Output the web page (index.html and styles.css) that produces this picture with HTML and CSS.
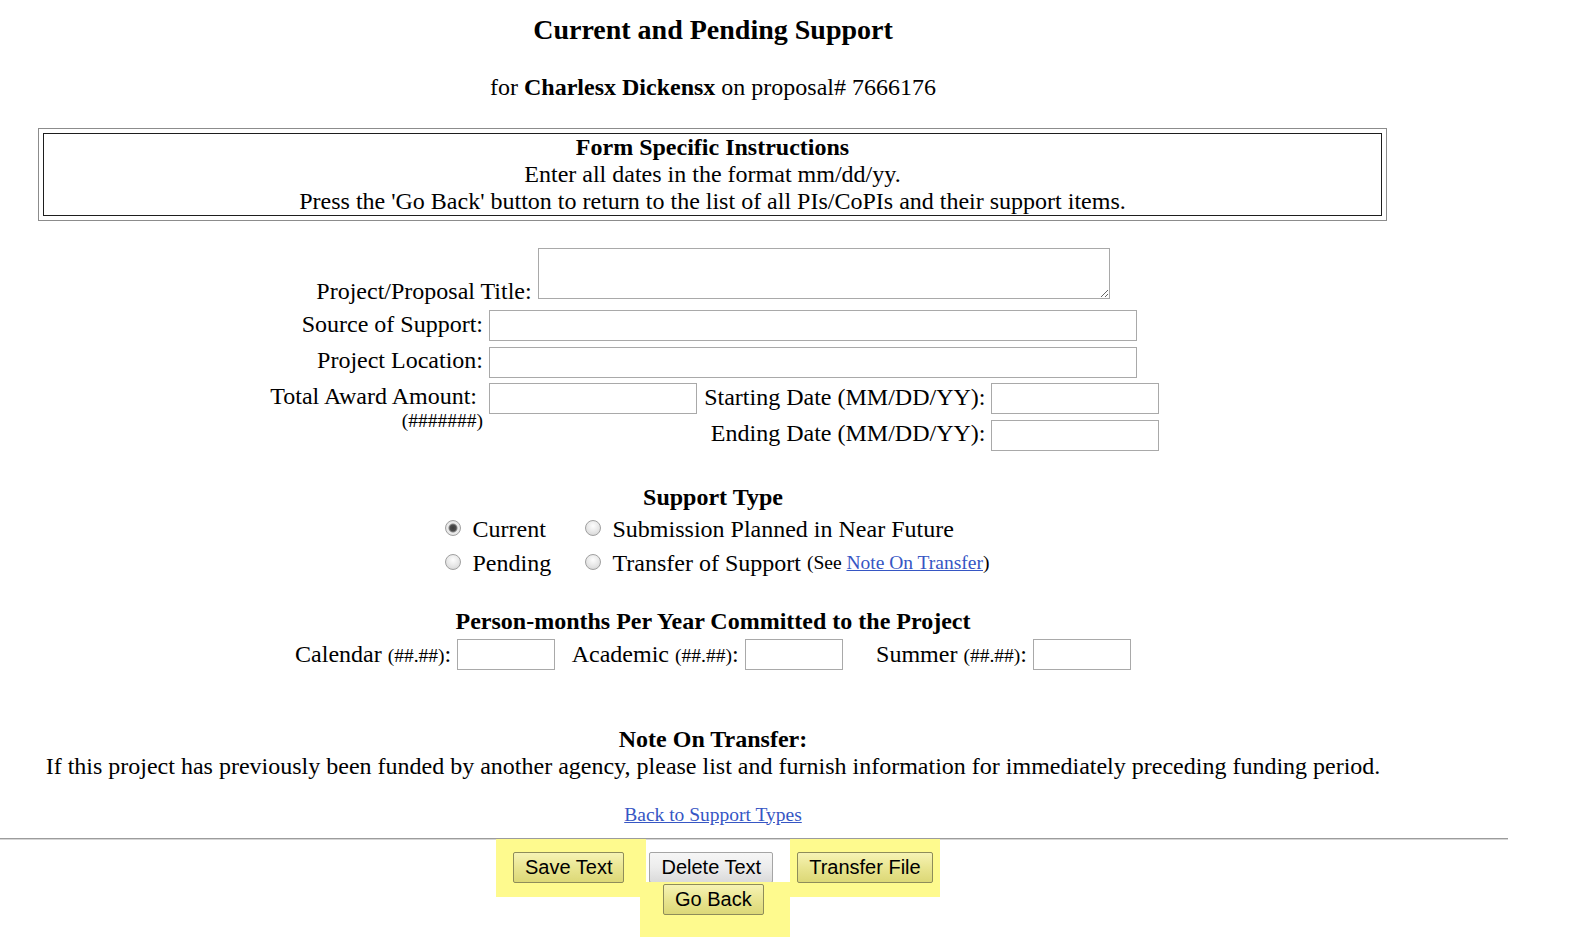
FILE: index.html
```html
<!DOCTYPE html>
<html>
<head>
<meta charset="utf-8">
<title>Current and Pending Support</title>
<link rel="stylesheet" href="styles.css">
</head>
<body>
<div class="page">
  <h1 class="title">Current and Pending Support</h1>
  <p class="for">for <b>Charlesx Dickensx</b> on proposal# 7666176</p>

  <div class="box">
    <div class="box-inner">
      <b>Form Specific Instructions</b><br>
      Enter all dates in the format mm/dd/yy.<br>
      Press the 'Go Back' button to return to the list of all PIs/CoPIs and their support items.
    </div>
  </div>

  <div class="title-row">
    <label class="lbl-title">Project/Proposal Title:</label>
    <textarea class="ta"></textarea>
  </div>

  <div class="fields">
    <label class="lbl c1 r1">Source of Support:</label>
    <input class="in wide r1" type="text">
    <label class="lbl c1 r2">Project Location:</label>
    <input class="in wide r2" type="text">
    <div class="lbl-award">
      <span class="lbl-line">Total Award Amount:</span>
      <span class="small hint">(#######)</span>
    </div>
    <input class="in award r3" type="text">
    <label class="lbl c3 r3">Starting Date (MM/DD/YY):</label>
    <input class="in date r3" type="text">
    <label class="lbl c3 r4">Ending Date (MM/DD/YY):</label>
    <input class="in date r4" type="text">
  </div>

  <h3 class="sec sec-type">Support Type</h3>
  <div class="types">
    <label class="opt"><input type="radio" name="t" class="rb" checked>Current</label>
    <label class="opt"><input type="radio" name="t" class="rb">Submission Planned in Near Future</label>
    <label class="opt"><input type="radio" name="t" class="rb">Pending</label>
    <label class="opt"><input type="radio" name="t" class="rb">Transfer of Support <span class="small see">(See <a href="#note" class="link">Note On Transfer</a>)</span></label>
  </div>

  <h3 class="sec sec-months">Person-months Per Year Committed to the Project</h3>
  <div class="months">
    <label class="m-lbl">Calendar <span class="small">(##.##)</span>:</label>
    <input class="in mon" type="text">
    <label class="m-lbl m-ac">Academic <span class="small">(##.##)</span>:</label>
    <input class="in mon" type="text">
    <label class="m-lbl m-su">Summer <span class="small">(##.##)</span>:</label>
    <input class="in mon" type="text">
  </div>

  <h3 class="sec sec-note" id="note">Note On Transfer:</h3>
  <p class="note">If this project has previously been funded by another agency, please list and furnish information for immediately preceding funding period.</p>
  <p class="back"><a href="#" class="link">Back to Support Types</a></p>
</div>
<hr class="rule">
<div class="btn-row1">
  <span class="hl hl-save"><button class="btn yellow">Save Text</button></span>
  <button class="btn gray">Delete Text</button>
  <span class="hl hl-transfer"><button class="btn yellow">Transfer File</button></span>
</div>
<div class="btn-row2">
  <span class="hl hl-back"><button class="btn yellow">Go Back</button></span>
</div>
</body>
</html>
```

FILE: styles.css
```css
html, body {
  margin: 0;
  padding: 0;
  background: #fff;
}
body {
  font-family: "Liberation Serif", "Times New Roman", serif;
  font-size: 24px;
  line-height: 26.5px;
  color: #000;
  width: 1589px;
  height: 937px;
  overflow: hidden;
}
.page {
  width: 1426px;
}
.title {
  font-size: 28px;
  line-height: 32px;
  font-weight: bold;
  text-align: center;
  margin: 14px 0 0;
}
.for {
  text-align: center;
  margin: 28px 0 0;
}
.box {
  margin: 27.5px 0 0 38px;
  width: 1339px;
  border: 1px solid #8c8c8c;
  padding: 4px;
}
.box-inner {
  border: 1px solid #1e1e1e;
  text-align: center;
  line-height: 27px;
}
.title-row {
  display: flex;
  justify-content: center;
  align-items: flex-end;
  gap: 6px;
  margin-top: 27px;
}
.lbl-title {
  margin-bottom: -5px;
}
.ta {
  width: 572px;
  height: 51px;
  box-sizing: border-box;
  border: 1px solid #a9a9a9;
  margin: 0;
  padding: 2px;
  font: inherit;
}
.fields {
  display: grid;
  grid-template-columns: 216px 208px 283.5px 168px;
  grid-template-rows: 31px 31px 31px 31px;
  column-gap: 5.5px;
  row-gap: 5.5px;
  justify-content: center;
  margin-top: 11px;
  align-items: center;
}
.lbl {
  text-align: right;
  white-space: nowrap;
  margin-top: -3px;
}
.c1 { grid-column: 1; }
.c3 { grid-column: 3; }
.r1 { grid-row: 1; }
.r2 { grid-row: 2; }
.r3 { grid-row: 3; }
.r4 { grid-row: 4; }
.in {
  box-sizing: border-box;
  height: 31px;
  border: 1px solid #a9a9a9;
  margin: 0;
  padding: 0 3px;
  font: inherit;
  background: #fff;
}
.wide {
  grid-column: 2 / span 3;
  width: 648.5px;
  justify-self: start;
}
.award {
  grid-column: 2;
  width: 208px;
}
.date {
  grid-column: 4;
  width: 168px;
}
.lbl-award {
  grid-column: 1;
  grid-row: 3 / span 2;
  align-self: start;
  text-align: right;
  display: flex;
  flex-direction: column;
  align-items: flex-end;
  white-space: nowrap;
}
.lbl-line {
  line-height: 27px;
  margin-right: 6px;
}
.small {
  font-size: 19.5px;
}
.hint {
  line-height: 14px;
  margin-top: 4px;
}
.sec {
  font-size: 24px;
  line-height: 26.5px;
  font-weight: bold;
  text-align: center;
  margin: 0;
}
.sec-type { margin-top: 33px; }
.types {
  display: grid;
  grid-template-columns: 140px auto;
  grid-auto-rows: 34.5px;
  justify-content: center;
  margin-top: 1.5px;
  padding-left: 8px;
}
.opt {
  display: flex;
  align-items: center;
  white-space: nowrap;
}
.rb {
  -webkit-appearance: none;
  appearance: none;
  width: 16px;
  height: 16px;
  margin: 0 12px 0 0;
  border-radius: 50%;
  border: 1px solid #a0a0a0;
  background: radial-gradient(circle at 50% 35%, #fdfdfd 0, #e6e6e6 55%, #cfcfcf 100%);
  box-sizing: border-box;
  flex: none;
  position: relative;
  top: -1px;
}
.rb:checked {
  background: radial-gradient(circle at 50% 50%, #3a3a3a 0, #4c4c4c 3px, #888 4px, #ececec 5px, #d8d8d8 100%);
}
.see {
  margin-left: 6px;
}
.link {
  color: #3656c4;
  text-decoration: underline;
}
.sec-months { margin-top: 27px; }
.months {
  display: flex;
  justify-content: center;
  align-items: center;
  margin-top: 5px;
  height: 31.5px;
}
.m-lbl {
  margin-right: 6px;
  white-space: nowrap;
}
.m-ac { margin-left: 16.5px; }
.m-su { margin-left: 33.5px; }
.mon {
  width: 98px;
}
.sec-note { margin-top: 55.5px; }
.note {
  text-align: center;
  margin: 0;
}
.back {
  text-align: center;
  margin: 22.5px 0 0;
  font-size: 19.5px;
}
.rule {
  width: 1508px;
  margin: 10px 0 0;
  border: 0;
  border-top: 1px solid #9c9c9c;
  border-bottom: 1px solid #d6d6d6;
  height: 0;
}
.btn-row1 {
  display: flex;
  align-items: flex-start;
  margin-left: 496px;
  margin-top: -1.5px;
}
.btn-row2 {
  display: flex;
  margin-left: 640px;
  margin-top: -15px;
}
.hl {
  display: block;
  background: #fefa8e;
}
.hl-save {
  padding: 13px 22px 14px 17px;
}
.hl-transfer {
  padding: 13px 7px 14px 7px;
  margin-left: 17px;
}
.hl-back {
  padding: 2px 26px 23px 23px;
}
.btn {
  font-family: "Liberation Sans", Arial, sans-serif;
  font-size: 20px;
  height: 31px;
  box-sizing: border-box;
  padding: 0 11px;
  margin: 0;
  border-radius: 2px;
  color: #000;
  line-height: 29px;
  display: block;
}
.yellow {
  border: 1px solid #8e8c5a;
  background: linear-gradient(#f6f3b4, #e9e591 50%, #dcd877);
}
.gray {
  border: 1px solid #a5a5a5;
  background: linear-gradient(#f6f6f6, #ececec 50%, #dadada);
  margin-top: 13px;
  margin-left: 3px;
}
```
